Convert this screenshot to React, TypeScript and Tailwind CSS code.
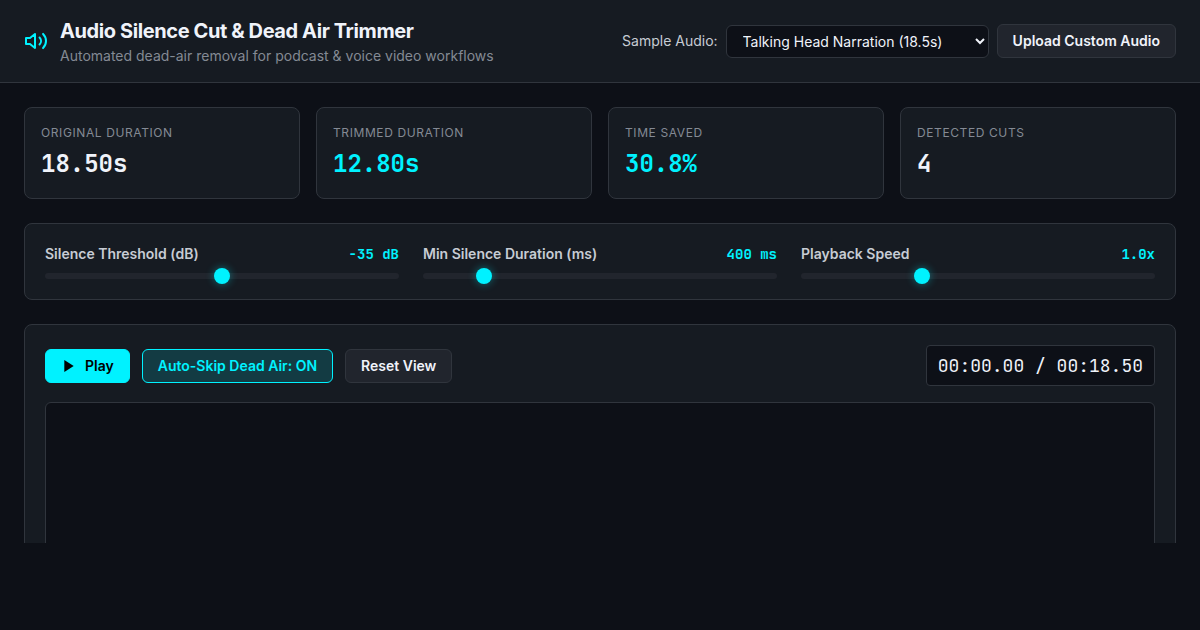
import { useState } from "react";

const stats = [
  { label: "Original Duration", value: "18.50s", accent: false },
  { label: "Trimmed Duration", value: "12.80s", accent: true },
  { label: "Time Saved", value: "30.8%", accent: true },
  { label: "Detected Cuts", value: "4", accent: false },
];

const mono = "font-['JetBrains_Mono','DejaVu_Sans_Mono',monospace]";

type SliderProps = {
  id: string;
  label: string;
  min: number;
  max: number;
  step: number;
  initial: number;
  format: (value: number) => string;
};

function Slider({ id, label, min, max, step, initial, format }: SliderProps) {
  const [value, setValue] = useState(initial);
  return (
    <div className="flex min-w-0 flex-col gap-2">
      <div className="flex items-start justify-between text-sm">
        <label htmlFor={id} className="leading-5 font-semibold text-[#c7ccd4]">
          {label}
        </label>
        <output htmlFor={id} className={`${mono} leading-[21px] font-bold text-[#00f2ff]`}>
          {format(value)}
        </output>
      </div>
      <input
        id={id}
        type="range"
        min={min}
        max={max}
        step={step}
        value={value}
        onChange={(e) => setValue(Number(e.target.value))}
        className="block h-1.5 w-full cursor-pointer appearance-none rounded-[3px] bg-[#21252d] outline-none [&::-webkit-slider-thumb]:size-4 [&::-webkit-slider-thumb]:appearance-none [&::-webkit-slider-thumb]:rounded-full [&::-webkit-slider-thumb]:bg-[#00f2ff] [&::-webkit-slider-thumb]:shadow-[0_0_8px_rgba(0,242,255,0.4)]"
      />
    </div>
  );
}

const button =
  "inline-flex cursor-pointer items-center justify-center gap-2 rounded-md border px-[15px] py-2 text-sm leading-4 font-semibold";

export default function App() {
  const [autoSkip, setAutoSkip] = useState(true);

  return (
    <div className="flex h-screen flex-col bg-[#0d1017] pb-[87px] font-['Inter',sans-serif] text-[#f0f3fa]">
      <header className="flex shrink-0 items-center justify-between border-b border-[#30353d] bg-[#161b22] px-6 py-4">
        <div className="flex items-center gap-3">
          <svg
            className="size-6 text-[#00f2ff]"
            viewBox="0 0 24 24"
            fill="none"
            stroke="currentColor"
            strokeWidth="2"
            strokeLinecap="round"
            strokeLinejoin="round"
            aria-hidden="true"
          >
            <polygon points="11 5 6 9 2 9 2 15 6 15 11 19 11 5" />
            <path d="M15.54 8.46a5 5 0 0 1 0 7.07" />
            <path d="M19.07 4.93a10 10 0 0 1 0 14.14" />
          </svg>
          <div>
            <h1 className="text-xl leading-[30px] font-bold tracking-[-0.02em]">
              Audio Silence Cut &amp; Dead Air Trimmer
            </h1>
            <p className="text-sm leading-5 text-[#848a94]">
              Automated dead-air removal for podcast &amp; voice video workflows
            </p>
          </div>
        </div>
        <div className="flex items-center gap-2">
          <label htmlFor="sample" className="text-sm text-[#c7ccd4]">
            Sample Audio:
          </label>
          <select
            id="sample"
            className="w-[263px] rounded-md border border-[#30353d] bg-[#0d1017] px-3 py-1.5 text-sm leading-[17px] text-[#f0f3fa]"
          >
            <option>Talking Head Narration (18.5s)</option>
          </select>
          <button type="button" className={`${button} border-[#30353d] bg-[#21252d]`}>
            Upload Custom Audio
          </button>
        </div>
      </header>

      <main className="flex min-h-0 flex-1 flex-col gap-6 overflow-hidden px-6 pt-6">
        <section className="grid shrink-0 grid-cols-4 gap-4">
          {stats.map((s) => (
            <div key={s.label} className="flex flex-col gap-1 rounded-lg border border-[#30353d] bg-[#161b22] p-4">
              <span className="text-xs leading-[18px] tracking-wider text-[#848a94] uppercase">{s.label}</span>
              <span className={`${mono} text-2xl leading-9 font-bold ${s.accent ? "text-[#00f2ff]" : ""}`}>
                {s.value}
              </span>
            </div>
          ))}
        </section>

        <section className="grid shrink-0 grid-cols-3 gap-6 rounded-lg border border-[#30353d] bg-[#161b22] p-5">
          <Slider
            id="threshold"
            label="Silence Threshold (dB)"
            min={-60}
            max={-10}
            step={1}
            initial={-35}
            format={(v) => `${v} dB`}
          />
          <Slider
            id="duration"
            label="Min Silence Duration (ms)"
            min={100}
            max={2000}
            step={50}
            initial={400}
            format={(v) => `${v} ms`}
          />
          <Slider
            id="speed"
            label="Playback Speed"
            min={0.5}
            max={2}
            step={0.1}
            initial={1}
            format={(v) => `${v.toFixed(1)}x`}
          />
        </section>

        <section className="flex shrink-0 flex-col gap-4 rounded-lg border border-[#30353d] bg-[#161b22] p-5">
          <div className="flex items-center justify-between">
            <div className="flex items-center gap-3">
              <button type="button" className={`${button} border-[#00f2ff] bg-[#00f2ff] text-black`}>
                <svg className="size-4" viewBox="0 0 24 24" fill="currentColor" aria-hidden="true">
                  <polygon points="5 3 19 12 5 21 5 3" />
                </svg>
                Play
              </button>
              <button
                type="button"
                aria-pressed={autoSkip}
                onClick={() => setAutoSkip(!autoSkip)}
                className={`${button} border-[#00f2ff] bg-[#00f2ff]/15 text-[#00f2ff]`}
              >
                Auto-Skip Dead Air: {autoSkip ? "ON" : "OFF"}
              </button>
              <button type="button" className={`${button} border-[#30353d] bg-[#21252d]`}>
                Reset View
              </button>
            </div>
            <div
              className={`${mono} rounded border border-[#30353d] bg-[#0d1017] px-[11px] py-1.5 text-lg leading-[27px]`}
            >
              00:00.00 / 00:18.50
            </div>
          </div>
          <div className="h-80 rounded-md border border-[#30353d] bg-[#0d1017]" />
        </section>
      </main>
    </div>
  );
}
